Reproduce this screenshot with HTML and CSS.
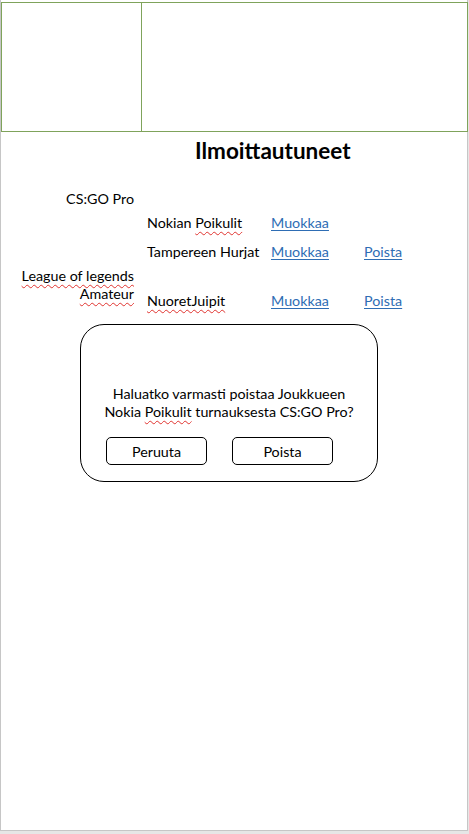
FILE: index.html
```html
<!DOCTYPE html>
<html lang="fi">
<head>
<meta charset="utf-8">
<title>Ilmoittautuneet</title>
<link rel="stylesheet" href="styles.css">
</head>
<body>
<div class="page">
  <div class="header">
    <div class="header-left"></div>
    <div class="header-right"></div>
  </div>
  <h1 class="title">Ilmoittautuneet</h1>
  <div class="list">
    <div class="label l-cs">CS:GO Pro</div>
    <div class="spacer"></div>

    <div class="label"></div>
    <div class="name">Nokian <span class="sp">Poikulit</span></div>
    <a class="link" href="#">Muokkaa</a>
    <div></div>

    <div class="label"></div>
    <div class="name">Tampereen Hurjat</div>
    <a class="link" href="#">Muokkaa</a>
    <a class="link" href="#">Poista</a>

    <div class="label l-lol"><span class="sp">League of legends</span><br><span class="sp">Amateur</span></div>
    <div class="name n-last"><span class="sp">NuoretJuipit</span></div>
    <a class="link n-last" href="#">Muokkaa</a>
    <a class="link n-last" href="#">Poista</a>
  </div>
  <div class="dialog">
    <p class="dialog-text">Haluatko varmasti poistaa Joukkueen<br>Nokia <span class="sp">Poikulit</span> turnauksesta CS:GO Pro?</p>
    <div class="dialog-buttons">
      <button class="btn">Peruuta</button>
      <button class="btn">Poista</button>
    </div>
  </div>
</div>
</body>
</html>
```

FILE: styles.css
```css
html, body {
  margin: 0;
  padding: 0;
  background: #e6e6e6;
}
body {
  font-family: Lato, "Open Sans", sans-serif;
  font-size: 14.3px;
  color: #000;
}
.page {
  box-sizing: border-box;
  width: 468px;
  height: 831px;
  background: #fff;
  border-left: 1px solid #c6c6c6;
  border-right: 1px solid #c6c6c6;
  border-bottom: 1px solid #c6c6c6;
  padding-top: 2px;
}
.header {
  display: grid;
  grid-template-columns: 140px 1fr;
  height: 130px;
  box-sizing: border-box;
  border: 1px solid #7fa35b;
  margin-right: -1px;
}
.header-left {
  border-right: 1px solid #7fa35b;
}
.title {
  margin: 6px 0 0 194px;
  font-size: 22.5px;
  font-weight: bold;
  line-height: 26px;
}
.list {
  display: grid;
  grid-template-columns: 133px 137px 93px 1fr;
  column-gap: 0;
  margin-top: 26px;
}
.label {
  text-align: right;
  line-height: 18px;
}
.spacer {
  grid-column: 2 / 5;
}
.l-cs {
  margin-bottom: 1px;
}
.name, .link {
  line-height: 18px;
  padding-top: 5px;
  padding-bottom: 6px;
  padding-left: 13px;
}
.link {
  padding-left: 0;
  color: #2e6db4;
  text-decoration: underline;
  text-underline-offset: 2px;
  justify-self: start;
}
.n-last {
  padding-top: 25px;
}
.sp {
  text-decoration: underline wavy #e0332f;
  text-decoration-thickness: 1px;
  text-underline-offset: 3px;
}
.dialog {
  box-sizing: border-box;
  margin: 8px 0 0 79px;
  width: 298px;
  height: 158px;
  border: 1px solid #000;
  border-radius: 24px;
  display: flex;
  flex-direction: column;
  align-items: center;
  padding-top: 60px;
}
.dialog-text {
  margin: 0;
  text-align: center;
  line-height: 18px;
}
.dialog-buttons {
  display: flex;
  gap: 25px;
  margin-top: 16px;
  margin-right: 19px;
}
.btn {
  font-family: inherit;
  font-size: 14.3px;
  background: #fff;
  color: #000;
  border: 1px solid #000;
  border-radius: 5px;
  width: 101px;
  height: 28px;
  padding: 0;
}
```
